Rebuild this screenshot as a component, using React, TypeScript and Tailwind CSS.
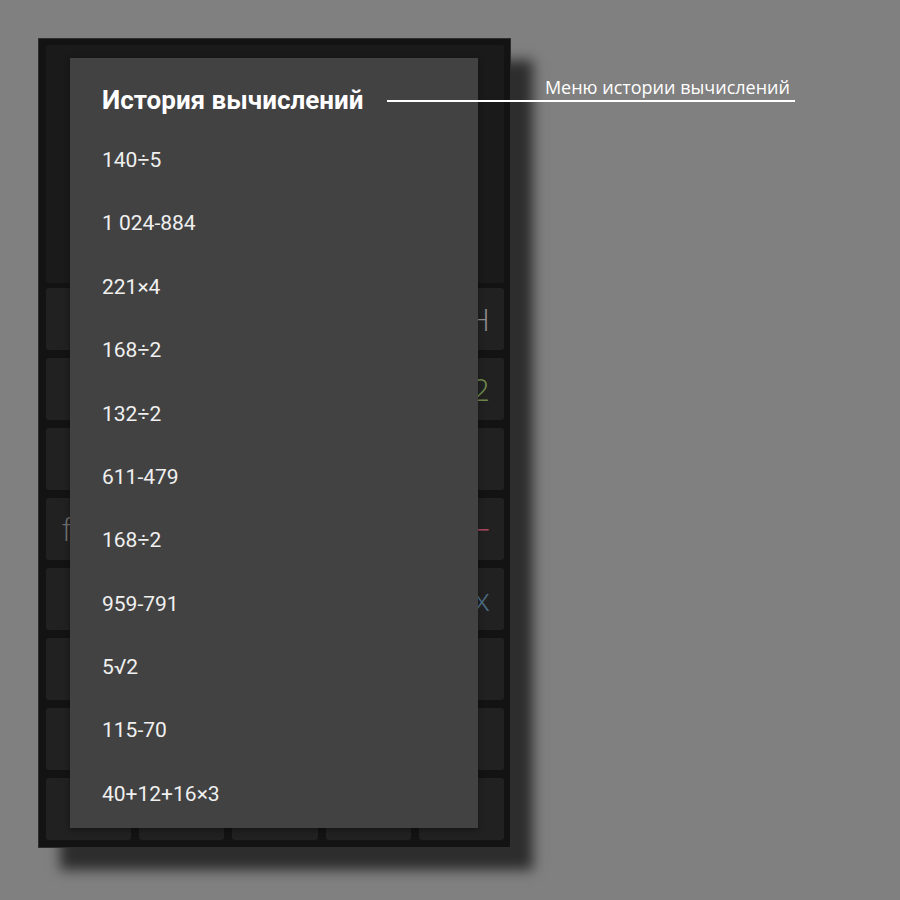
import React from "react";

type Btn = { label: string; color: string };

const E: Btn = { label: "", color: "" };

const rows: Btn[][] = [
  [E, E, E, E, { label: "SH", color: "text-[#8c8c8c]" }],
  [E, E, E, E, { label: "log2", color: "text-[#6f8a4c]" }],
  [E, E, E, E, E],
  [{ label: "f(x)", color: "text-[#707070]" }, E, E, E, { label: "+−", color: "text-[#a84860]" }],
  [E, E, E, E, { label: "1/x", color: "text-[#4d6e88]" }],
  [E, E, E, E, E],
  [E, E, E, E, E],
  [E, E, E, E, E],
];

const history = [
  "140÷5",
  "1 024-884",
  "221×4",
  "168÷2",
  "132÷2",
  "611-479",
  "168÷2",
  "959-791",
  "5√2",
  "115-70",
  "40+12+16×3",
];

export default function App() {
  return (
    <div className="relative w-[900px] h-[900px] bg-[#808080] overflow-hidden font-['Roboto',sans-serif]">
      <div className="flex pt-[38px] pl-[38px]">
        <div className="w-[473px] h-[810px] bg-[#131313] border border-[#2e2e2e] shadow-[22px_22px_12px_rgba(0,0,0,0.65)] pt-[6px] pl-[7px] pr-[6px] pb-[7px] flex flex-col">
          <div className="h-[238px] bg-[#1a1a1a] rounded-[2px]" />
          <div className="mt-[5px] grid grid-cols-5 gap-x-[8px] gap-y-[8px] grid-rows-[repeat(8,62px)]">
            {rows.map((row, r) =>
              row.map((b, c) => (
                <div
                  key={`${r}-${c}`}
                  className={`bg-[#212121] rounded-[3px] flex items-center font-['Open_Sans',sans-serif] font-light text-[32px] leading-none ${b.color} ${
                    c === 4 ? "justify-end pr-[14px]" : c === 0 ? "justify-start pl-[16px]" : "justify-center"
                  }`}
                >
                  {b.label}
                </div>
              ))
            )}
          </div>
        </div>
      </div>

      <div className="absolute left-[70px] top-[58px] w-[408px] h-[770px] bg-[#424242] shadow-[0_2px_6px_rgba(0,0,0,0.35)] pt-[13px] pl-[32px] flex flex-col">
        <div className="h-[58px] flex items-center text-[26px] font-bold text-white">
          История вычислений
        </div>
        {history.map((h, i) => (
          <div key={i} className="h-[63.4px] flex items-center text-[21px] text-[#f0f0f0]">
            {h}
          </div>
        ))}
      </div>

      <div className="absolute left-[387px] top-[75px] w-[408px] border-b-2 border-white flex justify-end pr-[5px] pb-[1px]">
        <span className="font-['Open_Sans',sans-serif] text-[18px] leading-[24px] text-white">
          Меню истории вычислений
        </span>
      </div>
    </div>
  );
}
